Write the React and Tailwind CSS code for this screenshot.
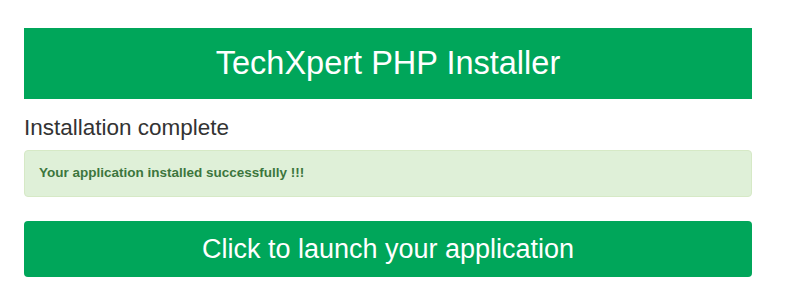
export default function App() {
  return (
    <div className="w-[789px] h-[304px] bg-white font-['Liberation_Sans',Arial,sans-serif]">
      <div className="pt-[28px] pl-[24px] w-[752px]">
        <div className="h-[71px] bg-[#00a65a] flex items-center justify-center text-white text-[32.5px] leading-none">
          TechXpert PHP Installer
        </div>
        <div className="mt-[15px] text-[22.5px] leading-[27px] text-[#333333]">Installation complete</div>
        <div className="mt-[9px] h-[47px] bg-[#dff0d8] border border-[#d6e9c6] rounded-[4px] flex items-center pl-[14px] text-[13.5px] font-bold text-[#3c763d]">
          Your application installed successfully !!!
        </div>
        <button className="mt-[24px] w-full h-[56px] bg-[#00a65a] rounded-[4px] flex items-center justify-center text-white text-[27px] leading-none">
          Click to launch your application
        </button>
      </div>
    </div>
  );
}
